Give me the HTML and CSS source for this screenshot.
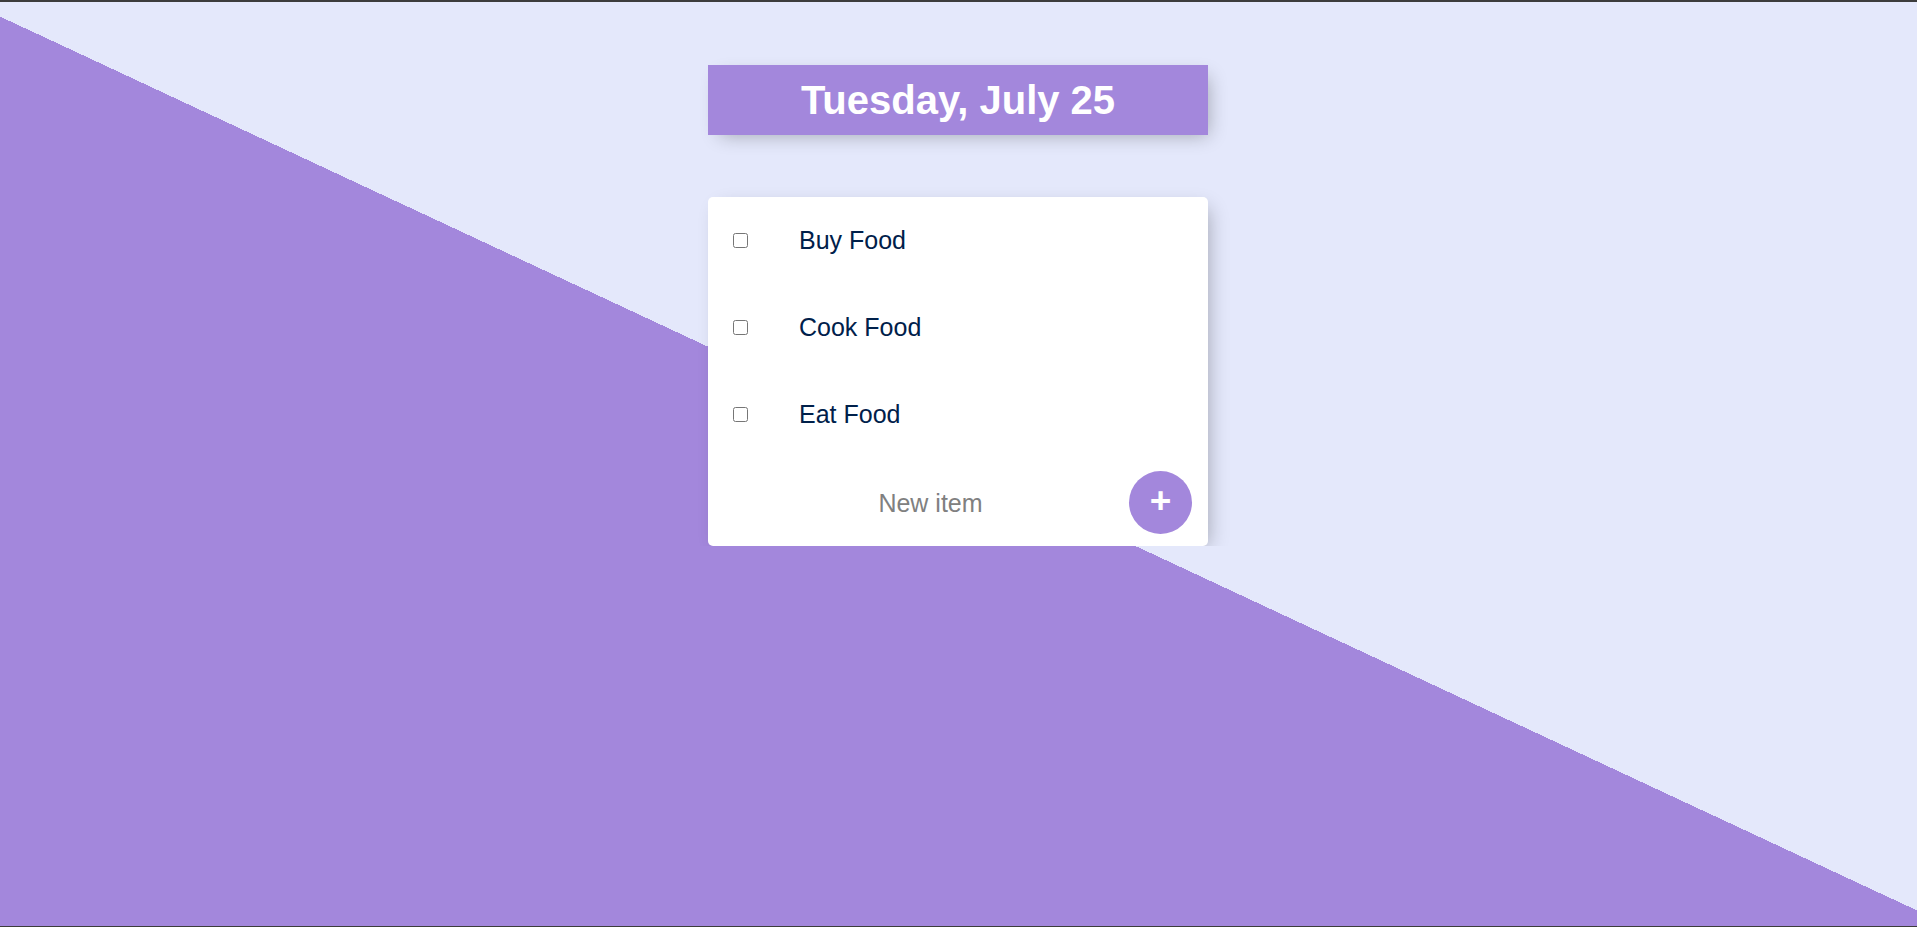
FILE: index.html
```html
<!DOCTYPE html>
<html lang="en">
<head>
<meta charset="utf-8">
<title>To-Do List</title>
<link rel="stylesheet" href="styles.css">
</head>
<body>
  <main class="page">
    <div class="box heading">
      <h1 class="title">Tuesday, July 25</h1>
    </div>
    <div class="box list">
      <div class="item">
        <input class="check" type="checkbox">
        <p class="text">Buy Food</p>
      </div>
      <div class="item">
        <input class="check" type="checkbox">
        <p class="text">Cook Food</p>
      </div>
      <div class="item">
        <input class="check" type="checkbox">
        <p class="text">Eat Food</p>
      </div>
      <form class="item new-item">
        <input class="new-input" type="text" name="newItem" placeholder="New item" autocomplete="off">
        <button class="add" type="button">+</button>
      </form>
    </div>
  </main>
</body>
</html>
```

FILE: styles.css
```css
html {
  height: 100%;
  background-color: #e4e8fb;
  background-image: linear-gradient(25deg, #a387dc 50%, #e4e8fb 50%);
  font-family: "Liberation Sans", Arial, sans-serif;
}

html::before,
html::after {
  content: "";
  position: fixed;
  left: 0;
  right: 0;
  background: #3c3c3c;
  z-index: 10;
}

html::before {
  top: 0;
  height: 2px;
}

html::after {
  bottom: 0;
  height: 1px;
}

body {
  margin: 0;
}

.page {
  display: flex;
  flex-direction: column;
  align-items: center;
  padding-top: 65px;
  padding-right: 1px;
}

.box {
  width: 500px;
  box-shadow: 6px 6px 19px -6px rgba(0, 0, 0, 0.3);
}

.heading {
  height: 70px;
  background-color: #a387dc;
  display: flex;
  align-items: center;
  justify-content: center;
}

.title {
  margin: 0;
  color: #fff;
  font-size: 40px;
  font-weight: bold;
  line-height: normal;
}

.list {
  margin-top: 62px;
  background: #fff;
  border-radius: 5px;
  display: flex;
  flex-direction: column;
}

.item {
  height: 87px;
  box-sizing: border-box;
  display: flex;
  align-items: center;
}

.new-item {
  height: 88px;
  margin: 0;
  padding-left: 25px;
}

.check {
  width: 15px;
  height: 15px;
  margin: 0 26px 0 25px;
  flex: none;
}

.text {
  margin: 0;
  padding: 25px;
  font-size: 25px;
  color: #00204a;
  line-height: normal;
}

.new-input {
  width: 395px;
  height: 75px;
  box-sizing: border-box;
  padding: 2px 2px 0;
  border: none;
  background: transparent;
  text-align: center;
  font-family: inherit;
  font-size: 25px;
  color: #00204a;
  outline: none;
}

.new-input::placeholder {
  color: #808080;
  opacity: 1;
}

.add {
  width: 63px;
  height: 63px;
  flex: none;
  margin-left: 1px;
  border: 0;
  border-radius: 50%;
  background-color: #a387dc;
  color: #fff;
  font-family: inherit;
  font-size: 37px;
  font-weight: bold;
  line-height: 1;
  padding: 0 0 4px;
  display: flex;
  align-items: center;
  justify-content: center;
}
```
